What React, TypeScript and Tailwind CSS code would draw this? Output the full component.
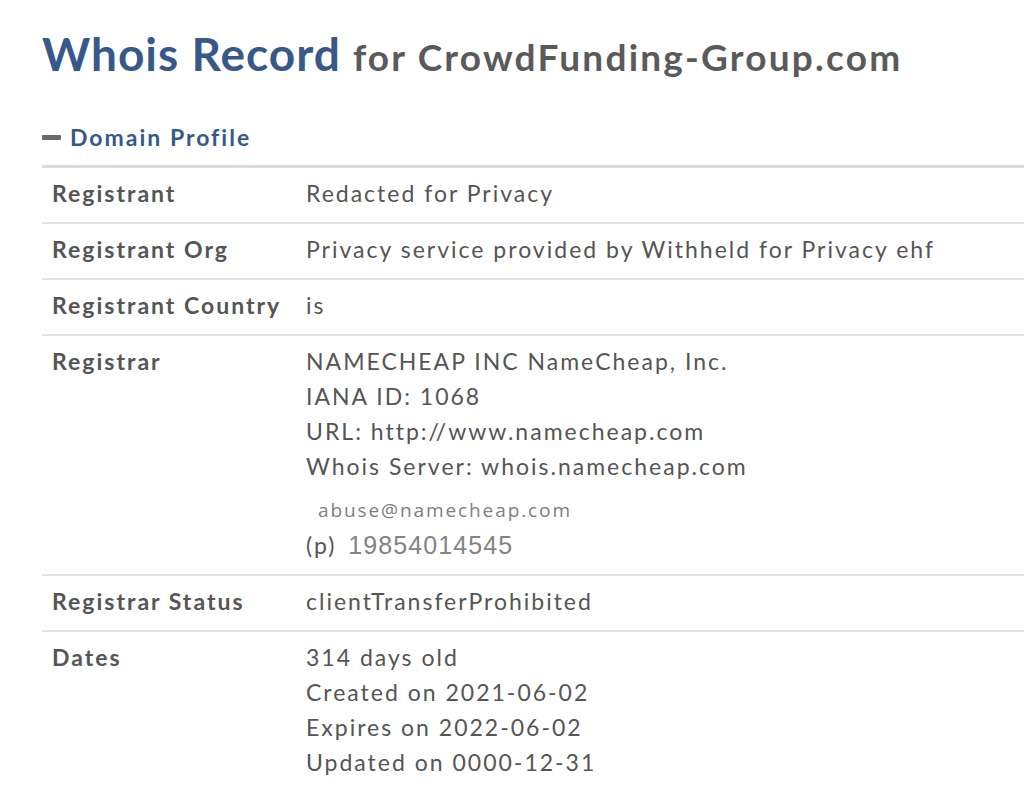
import React from "react";

const rows: { label: string; value: string }[] = [
  { label: "Registrant", value: "Redacted for Privacy" },
  { label: "Registrant Org", value: "Privacy service provided by Withheld for Privacy ehf" },
  { label: "Registrant Country", value: "is" },
];

function Row({ label, children, last }: { label: string; children: React.ReactNode; last?: boolean }) {
  return (
    <div className={`flex pt-[8px] pb-[11px] ${last ? "" : "border-b-2 border-[#e4e4e4]"}`}>
      <div className="w-[264px] shrink-0 pl-[10px] font-bold text-[#555555]">{label}</div>
      <div className="text-[#555555]">{children}</div>
    </div>
  );
}

export default function App() {
  return (
    <div className="min-h-[786px] overflow-hidden bg-white pl-[42px] font-['Lato',sans-serif]">
      <h1 className="pt-[26px] text-[46px] leading-[56px] font-bold tracking-[1px] whitespace-nowrap text-[#37598a]">
        Whois Record
        <span className="ml-[12px] text-[37px] tracking-[2.2px] text-[#5a5a5a]">for CrowdFunding-Group.com</span>
      </h1>
      <div className="mt-[38px] flex h-[28px] items-center text-[23px] leading-[28px] font-bold tracking-[2px] text-[#37598a]">
        <span className="mr-[9px] inline-block h-[5px] w-[19px] rounded-[1px] bg-[#6a6a6a]" />
        Domain Profile
      </div>
      <div className="mt-[14px] border-t-[3px] border-[#dcdcdc] text-[23px] leading-[35px] tracking-[2px]">
        {rows.map((r) => (
          <Row key={r.label} label={r.label}>
            {r.value}
          </Row>
        ))}
        <Row label="Registrar">
          <div>NAMECHEAP INC NameCheap, Inc.</div>
          <div>IANA ID: 1068</div>
          <div>URL: http://www.namecheap.com</div>
          <div>Whois Server: whois.namecheap.com</div>
          <div className="mt-[9px] pl-[12px] font-['Open_Sans',sans-serif] text-[19px] leading-[34px] tracking-[1.9px] text-[#7e7e7e]">
            abuse@namecheap.com
          </div>
          <div className="leading-[36px]">
            (p)
            <span className="ml-[12px] font-['Liberation_Sans',sans-serif] text-[25px] leading-[20px] tracking-[1.1px] text-[#838383]">
              19854014545
            </span>
          </div>
        </Row>
        <Row label="Registrar Status">clientTransferProhibited</Row>
        <Row label="Dates" last>
          <div>314 days old</div>
          <div>Created on 2021-06-02</div>
          <div>Expires on 2022-06-02</div>
          <div>Updated on 0000-12-31</div>
        </Row>
      </div>
    </div>
  );
}
